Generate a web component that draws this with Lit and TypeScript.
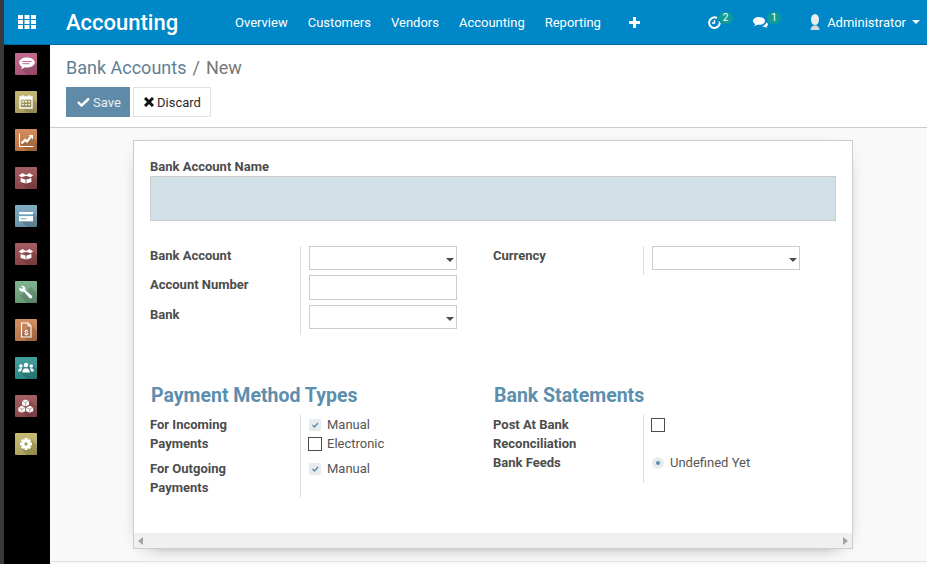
import { LitElement, html, css, svg } from 'lit';
import { customElement } from 'lit/decorators.js';

// sidebar apps: tile colour + white glyph
const glyphs = {
  chat: svg`<path d="M12 4.500c-4.300 0-7.800 2.100-7.800 5 0 1.600 1 3 2.700 3.900-.1 1.100-.7 2-1.500 2.700 1.800-.1 3.300-.8 4.400-1.800.7.100 1.400.2 2.200.2 4.300 0 7.800-2.200 7.800-5s-3.500-5-7.800-5z" fill="#fff"/><path d="M7.500 8.500h9M7.500 10.700h7" stroke="#b9567f" stroke-width=".9"/>`,
  cal: svg`<path d="M5 6h12v11H5z" fill="none" stroke="#fff" stroke-width="1.300"/><path d="M5 6h12v2.600H5z" fill="#fff"/><path d="M7.800 4v3M14.200 4v3" stroke="#fff" stroke-width="1.500"/><path d="M7 10h1.700v1.300H7zM10.150 10h1.700v1.300h-1.700zM13.300 10H15v1.300h-1.700zM7 13h1.700v1.300H7zM10.150 13h1.700v1.300h-1.700zM13.300 13H15v1.300h-1.700z" fill="#fff"/>`,
  chart: svg`<path d="M4.500 4.500v13h14" stroke="#fff" stroke-width="1" fill="none"/><path d="M6.500 14.500l3.500-3.500 2 1.500 3.500-4.500" stroke="#fff" stroke-width="2.200" fill="none"/><path d="M13.500 6h4.500v4.500z" fill="#fff"/>`,
  box: svg`<path d="M3.800 8.400l3.700-2.400 3.500 2 3.500-2 3.700 2.400-2.700 1.800-4.500-1.500-4.500 1.500z" fill="#fff"/><path d="M5.600 11l5 1.500v4L5.600 15zM16.400 11l-5 1.500v4l5-1.500z" fill="#fff"/>`,
  card: svg`<path d="M4 7h14v9.300H4z" fill="#fff"/><path d="M4 9.300h14v1.800H4z" fill="#6f9fba"/><path d="M5.500 13h6v1.300h-6z" fill="#9dbdce"/>`,
  wrench: svg`<path d="M5.500 5c1.700-.8 3.800-.3 4.600 1.400.4.900.4 1.800.1 2.600l6.600 5.800c.7.700.5 1.600-.1 2.200-.7.600-1.500.6-2.200-.1L8.900 10.500c-1.600.6-3.300.1-4.200-1.300-.6-.9-.7-2-.3-2.900l2.200 1.800 1.700-1.300z" fill="#fff"/>`,
  doc: svg`<path d="M6.500 4h6.500l3 3v11H6.500z" fill="none" stroke="#fff" stroke-width="1.100"/><path d="M13 4v3h3" fill="none" stroke="#fff" stroke-width=".9"/><text x="11.200" y="15.500" font-size="8" font-family="Roboto, sans-serif" font-weight="700" text-anchor="middle" fill="#fff">$</text>`,
  people: svg`<circle cx="11" cy="8" r="2.300" fill="#fff"/><circle cx="5.800" cy="9" r="1.800" fill="#fff"/><circle cx="16.200" cy="9" r="1.800" fill="#fff"/><path d="M7.200 15.500c0-2.800 1.700-4.300 3.800-4.300s3.800 1.500 3.800 4.300zM3 14.500c0-2 1.100-3.300 2.800-3.300.5 0 1 .1 1.400.3-.7.800-1 1.800-1.100 3zM19 14.500c0-2-1.100-3.300-2.800-3.300-.5 0-1 .1-1.400.3.700.8 1 1.800 1.100 3z" fill="#fff"/>`,
  cubes: svg`<path d="M10.500 4.500l3.500 1.500v3.800l-3.500 1.600L7 9.800V6zM6.800 10.800l3.500 1.600v3.800l-3.500 1.600-3.500-1.600v-3.800zM14.700 10.800l3.500 1.600v3.800l-3.500 1.600-3.500-1.600v-3.800z" fill="#fff"/><path d="M7 6l3.500 1.600L14 6M10.500 7.600v3.600M3.300 12.400l3.500 1.600 3.500-1.600M6.800 14v3.600M11.200 12.400l3.500 1.600 3.500-1.600M14.700 14v3.600" fill="none" stroke="#8f4a4e" stroke-width=".5"/>`,
  gear: svg`<circle cx="11" cy="11" r="4.500" fill="#fff"/><path d="M11 5v12M5 11h12M6.800 6.800l8.400 8.400M15.200 6.800l-8.400 8.400" stroke="#fff" stroke-width="2.800"/><circle cx="11" cy="11" r="1.700" fill="#a89d5a"/>`,
};

const apps: [string, keyof typeof glyphs][] = [
  ['#bd5c84', 'chat'], ['#bdb068', 'cal'], ['#cd7f4b', 'chart'], ['#9a4c50', 'box'],
  ['#74a3bd', 'card'], ['#9a4c50', 'box'], ['#73ab85', 'wrench'], ['#cd8252', 'doc'],
  ['#2f9494', 'people'], ['#9a4f53', 'cubes'], ['#c0b566', 'gear'],
];

const nav = ['Overview', 'Customers', 'Vendors', 'Accounting', 'Reporting'];

@customElement('app-root')
export class AppRoot extends LitElement {
  static styles = css`
    :host {
      display: flex;
      width: 927px;
      height: 564px;
      overflow: hidden;
      font-family: Roboto, sans-serif;
      font-size: 13px;
      color: #4c4c4c;
      background: #000;
    }
    * { box-sizing: border-box; }
    .edge { width: 4px; background: #37393c; flex: none; }
    .main { flex: 1; display: flex; flex-direction: column; min-width: 0; }

    .topbar {
      height: 45px;
      flex: none;
      display: flex;
      align-items: center;
      background: #0087c7;
      border-bottom: 1px solid #00689b;
      color: #fff;
    }
    .apps { width: 46px; margin-left: 14px; display: flex; }
    .brand { font-size: 22px; font-weight: 500; width: 184px; margin-left: -12px; padding-left: 14px; white-space: nowrap; }
    .nav { display: flex; gap: 20px; margin-left: -1px; }
    .plus { margin-left: 28px; display: flex; }
    .sys { margin-left: auto; display: flex; align-items: center; }
    .ind { position: relative; display: flex; }
    .badge {
      position: absolute;
      left: 10px;
      top: -4px;
      width: 15px;
      height: 12px;
      border-radius: 6px;
      background: #0f9c98;
      font-size: 10px;
      line-height: 11px;
      text-align: center;
    }
    .badge.msg { left: 14px; width: 14px; }
    .chat { margin-left: 32px; }
    .user { display: flex; align-items: center; margin-left: 40px; margin-right: 7px; }
    .user span { margin-left: 5px; }
    .caret {
      margin-left: 6px;
      border-left: 4px solid transparent;
      border-right: 4px solid transparent;
      border-top: 4px solid #fff;
    }

    .body { flex: 1; display: flex; min-height: 0; }
    .side {
      width: 46px;
      flex: none;
      padding: 8px 0 0 11px;
      display: flex;
      flex-direction: column;
      gap: 16px;
    }
    .tile { width: 22px; height: 22px; display: block; }

    .page { flex: 1; display: flex; flex-direction: column; background: #f9f9f9; min-width: 0; }
    .head {
      height: 83px;
      flex: none;
      background: #fff;
      border-bottom: 1px solid #ccc;
      padding: 12px 0 0 16px;
    }
    .crumb { font-size: 18px; line-height: 22px; color: #5f7f96; display: flex; gap: 6px; }
    .crumb .cur { color: #777; }
    .btns { display: flex; gap: 3px; margin-top: 8px; }
    .btn {
      height: 30px;
      display: flex;
      align-items: center;
      white-space: nowrap;
    }
    .btn svg { flex: none; }
    .save { background: #5f8ba8; color: #e9eff3; width: 64px; gap: 3px; padding-left: 11px; }
    .discard { background: #fff; border: 1px solid #dee2e6; color: #2b2b2b; width: 78px; gap: 3px; padding-left: 10px; }

    .canvas { flex: 1; padding: 12px 0 0 83px; }
    .sheet {
      width: 720px;
      height: 409px;
      background: #fff;
      border: 1px solid #c8ced6;
      box-shadow: 0 5px 20px -15px #000;
      display: flex;
      flex-direction: column;
    }
    .content { flex: 1; padding: 18px 16px 0; }
    .label { font-weight: 700; line-height: 16px; color: #4c4c4c; }
    .name { height: 45px; margin-top: 1px; background: #d2e0e7; border: 1px solid #ccc; }

    .cols { display: grid; grid-template-columns: 343px 343px; }
    .cols.top { margin-top: 25px; height: 138px; }
    .group { display: grid; grid-template-columns: 151px 148px; align-content: start; }
    .group .label { padding-right: 8px; border-right: 1px solid #ddd; }
    .group .field { padding-left: 8px; }
    h2 {
      margin: 0 0 7px 1px;
      font-size: 19.500px;
      line-height: 24px;
      font-weight: 700;
      color: #5c8ead;
    }
    .top .label, .top .field { height: 30px; }
    .top .row1 { height: 29px; }
    .top .label { padding-top: 2px; }
    .box {
      position: relative;
      width: 148px;
      height: 24px;
      border: 1px solid #ccc;
      background: #fff;
    }
    .box.tall { height: 25px; }
    .box.sel::after {
      content: '';
      position: absolute;
      right: 2px;
      top: 11px;
      border-left: 4px solid transparent;
      border-right: 4px solid transparent;
      border-top: 4px solid #4c4c4c;
    }
    .bottom .label { line-height: 19px; }
    .bottom .field { display: flex; flex-direction: column; }
    .bottom .pad { padding-bottom: 6px; }
    .bottom .pad-lg { padding-bottom: 11px; }
    .opt { height: 19px; display: flex; align-items: center; gap: 6px; color: #555; }
    .chk { width: 12px; height: 12px; background: #e9ecef; display: flex; flex: none; }
    .chk svg { display: block; }
    .empty { width: 14px; height: 14px; border: 1px solid #4c4c4c; margin-left: -1px; margin-right: -1px; flex: none; background: #fff; }
    .radio {
      width: 12px;
      height: 12px;
      border-radius: 50%;
      background: #e9ecef;
      display: flex;
      align-items: center;
      justify-content: center;
      flex: none;
    }
    .radio i { width: 4px; height: 4px; border-radius: 50%; background: #5c8ead; }

    .hscroll {
      height: 15px;
      flex: none;
      background: #f0f0f0;
      display: flex;
      align-items: center;
      justify-content: space-between;
      padding: 0 4px;
    }
    .arrow-l, .arrow-r { border-top: 4px solid transparent; border-bottom: 4px solid transparent; }
    .arrow-l { border-right: 5px solid #a3a3a3; }
    .arrow-r { border-left: 5px solid #a3a3a3; }
    .foot { height: 1px; margin: 12px 0 0 -83px; background: #e0e0e0; width: 877px; }
  `;

  tile(color: string, glyph: keyof typeof glyphs, i: number) {
    return html`<svg class="tile" viewBox="0 0 22 22">
      <defs><linearGradient id="g${i}" x1="0" y1="0" x2="0" y2="1">
        <stop offset="0" stop-color="#fff" stop-opacity=".1"/><stop offset="1" stop-color="#000" stop-opacity=".1"/>
      </linearGradient></defs>
      <rect width="22" height="22" rx="1" fill=${color}/>
      <path d="M5 15 L12 22 H22 V12 L16 6z" fill="#000" opacity=".14"/>
      <rect width="22" height="22" rx="1" fill="url(#g${i})"/>
      ${glyphs[glyph]}
    </svg>`;
  }

  check() {
    return html`<span class="chk"><svg width="12" height="12" viewBox="0 0 12 12"><path d="M3.500 6l2 2 3.500-4" fill="none" stroke="#5c8ead" stroke-width="1.500"/></svg></span>`;
  }

  render() {
    return html`
      <div class="edge"></div>
      <div class="main">
        <div class="topbar">
          <div class="apps">
            <svg width="18" height="14" viewBox="0 0 18 14" fill="#fff">
              <path d="M0 0h5v4H0zM6.500 0h5v4h-5zM13 0h5v4h-5zM0 5h5v4H0zM6.500 5h5v4h-5zM13 5h5v4h-5zM0 10h5v4H0zM6.500 10h5v4h-5zM13 10h5v4h-5z"/>
            </svg>
          </div>
          <div class="brand">Accounting</div>
          <div class="nav">${nav.map((n) => html`<span>${n}</span>`)}</div>
          <div class="plus">
            <svg width="11" height="11" viewBox="0 0 11 11"><path d="M4 0h3v4h4v3H7v4H4V7H0V4h4z" fill="#fff"/></svg>
          </div>
          <div class="sys">
            <div class="ind">
              <svg width="13" height="13" viewBox="0 0 13 13" fill="none" stroke="#fff" stroke-width="2">
                <path d="M9 2A5.300 5.300 0 1 0 11.500 5"/><path d="M6.500 4v3H4" stroke-width="1.300"/>
              </svg>
              <span class="badge">2</span>
            </div>
            <div class="ind chat">
              <svg width="15" height="13" viewBox="0 0 15 13" fill="#fff">
                <path d="M6 1C2.700 1 0 2.700 0 5c0 1.300.9 2.400 2.200 3.100-.1.800-.5 1.300-1 1.800 1.300-.1 2.300-.6 3.200-1.200.5.1 1 .1 1.600.1 3.300 0 6-1.600 6-3.800S9.300 1 6 1z"/>
                <path d="M13 6.500c0 1.800-1.700 3.200-4 3.700.8.600 1.800.9 3 .8.600.5 1.300.9 2.500 1-.5-.5-.8-1-.9-1.600.9-.5 1.400-1.300 1.400-2.100 0-.7-.6-1.400-2-1.800z"/>
              </svg>
              <span class="badge msg">1</span>
            </div>
            <div class="user">
              <svg width="14" height="18" viewBox="0 0 14 18">
                <ellipse cx="7" cy="6.500" rx="4" ry="5.500" fill="#e8ecee"/>
                <path d="M2.500 17c0-2.200 1.500-3.400 3-4.500h3c1.500 1.100 3 2.300 3 4.500z" fill="#d3d9dc"/>
              </svg>
              <span>Administrator</span>
              <i class="caret"></i>
            </div>
          </div>
        </div>
        <div class="body">
          <div class="side">${apps.map(([c, g], i) => this.tile(c, g, i))}</div>
          <div class="page">
            <div class="head">
              <div class="crumb"><span>Bank Accounts</span><span class="cur">/</span><span class="cur">New</span></div>
              <div class="btns">
                <div class="btn save">
                  <svg width="13" height="10" viewBox="0 0 13 10"><path d="M1 5l3.500 3.500L12 1.500" fill="none" stroke="#fff" stroke-width="2.400"/></svg>
                  Save
                </div>
                <div class="btn discard">
                  <svg width="10" height="10" viewBox="0 0 10 10"><path d="M1 1l8 8M9 1L1 9" stroke="#111" stroke-width="3"/></svg>
                  Discard
                </div>
              </div>
            </div>
            <div class="canvas">
              <div class="sheet">
                <div class="content">
                  <div class="label">Bank Account Name</div>
                  <div class="name"></div>
                  <div class="cols top">
                    <div class="group">
                      <div class="label row1">Bank Account</div><div class="field row1"><div class="box sel"></div></div>
                      <div class="label">Account Number</div><div class="field"><div class="box tall"></div></div>
                      <div class="label">Bank</div><div class="field"><div class="box sel"></div></div>
                    </div>
                    <div class="group">
                      <div class="label row1">Currency</div><div class="field row1"><div class="box sel"></div></div>
                    </div>
                  </div>
                  <div class="cols bottom">
                    <div>
                      <h2>Payment Method Types</h2>
                      <div class="group">
                        <div class="label pad">For Incoming<br />Payments</div>
                        <div class="field">
                          <div class="opt">${this.check()}Manual</div>
                          <div class="opt"><span class="empty"></span>Electronic</div>
                        </div>
                        <div class="label">For Outgoing<br />Payments</div>
                        <div class="field">
                          <div class="opt">${this.check()}Manual</div>
                        </div>
                      </div>
                    </div>
                    <div>
                      <h2>Bank Statements</h2>
                      <div class="group">
                        <div class="label">Post At Bank<br />Reconciliation</div>
                        <div class="field"><div class="opt"><span class="empty"></span></div></div>
                        <div class="label pad-lg">Bank Feeds</div>
                        <div class="field"><div class="opt"><span class="radio"><i></i></span>Undefined Yet</div></div>
                      </div>
                    </div>
                  </div>
                </div>
                <div class="hscroll"><i class="arrow-l"></i><i class="arrow-r"></i></div>
              </div>
              <div class="foot"></div>
            </div>
          </div>
        </div>
      </div>
    `;
  }
}

declare global {
  interface HTMLElementTagNameMap {
    'app-root': AppRoot;
  }
}
